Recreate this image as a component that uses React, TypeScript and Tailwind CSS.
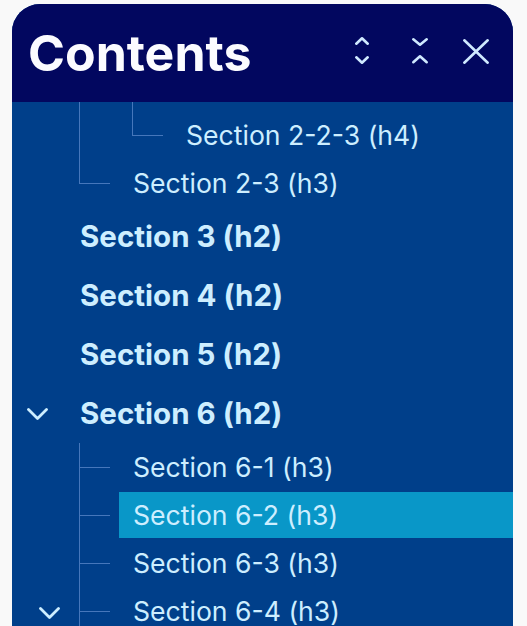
import React from "react";

type Guide = { x: number; kind: "pass" | "tee" | "end" };

interface Row {
  text: string;
  level: 2 | 3 | 4;
  guides: Guide[];
  chevron?: boolean;
  active?: boolean;
}

const rows: Row[] = [
  { text: "Section 2-2-3 (h4)", level: 4, guides: [{ x: 67, kind: "pass" }, { x: 120, kind: "end" }] },
  { text: "Section 2-3 (h3)", level: 3, guides: [{ x: 67, kind: "end" }] },
  { text: "Section 3 (h2)", level: 2, guides: [] },
  { text: "Section 4 (h2)", level: 2, guides: [] },
  { text: "Section 5 (h2)", level: 2, guides: [] },
  { text: "Section 6 (h2)", level: 2, guides: [], chevron: true },
  { text: "Section 6-1 (h3)", level: 3, guides: [{ x: 67, kind: "tee" }] },
  { text: "Section 6-2 (h3)", level: 3, guides: [{ x: 67, kind: "tee" }], active: true },
  { text: "Section 6-3 (h3)", level: 3, guides: [{ x: 67, kind: "tee" }] },
  { text: "Section 6-4 (h3)", level: 3, guides: [{ x: 67, kind: "tee" }], chevron: true },
];

const Chevron = () => (
  <svg width="21" height="12" viewBox="0 0 21 12" fill="none" stroke="#cdeeff" strokeWidth="2.8" strokeLinecap="round" strokeLinejoin="round">
    <path d="M1.5 1.5 L10.5 10.5 L19.5 1.5" />
  </svg>
);

const GuideLines = ({ g }: { g: Guide }) => (
  <>
    {g.kind === "end" ? (
      <div className="absolute top-0 h-1/2 w-px bg-[#4677bb]" style={{ left: g.x }} />
    ) : (
      <div className="absolute top-0 bottom-0 w-px bg-[#4677bb]" style={{ left: g.x }} />
    )}
    {g.kind !== "pass" && (
      <div className="absolute top-1/2 h-px w-[31px] bg-[#4677bb]" style={{ left: g.x }} />
    )}
  </>
);

const TocRow = ({ row }: { row: Row }) => {
  if (row.level === 2) {
    return (
      <div className="flex h-[59px] items-center">
        <div className="flex w-[68px] items-center pl-[15px]">{row.chevron && <Chevron />}</div>
        <span className="text-[29.5px] font-bold leading-none text-[#cdeeff]">{row.text}</span>
      </div>
    );
  }
  const textLeft = row.level === 3 ? 107 : 160;
  return (
    <div className="relative flex h-[48px] items-stretch">
      {row.guides.map((g, i) => (
        <GuideLines key={i} g={g} />
      ))}
      {row.chevron && (
        <div className="absolute left-[27px] top-[20px]">
          <Chevron />
        </div>
      )}
      <div
        className={
          row.active
            ? "my-px flex flex-1 items-center bg-[#0997c8] pl-[14px]"
            : "flex flex-1 items-center pl-[14px]"
        }
        style={{ marginLeft: textLeft }}
      >
        <span className="whitespace-nowrap text-[26.6px] leading-none text-[#cdeeff]">{row.text}</span>
      </div>
    </div>
  );
};

export default function App() {
  return (
    <div className="h-[626px] overflow-hidden bg-[#f9f9f9] pl-[12px] pt-[4px]" style={{ fontFamily: "Inter, 'Noto Sans', sans-serif" }}>
      <div className="flex h-full w-[501px] flex-col overflow-hidden rounded-t-[28px] bg-[#003f8a]">
        <div className="flex h-[98px] shrink-0 items-center bg-[#02075f] pl-[16px] pr-[23px]">
          <h1 className="text-[50px] font-bold leading-none text-[#fbfbff]">Contents</h1>
          <div className="ml-auto flex items-center">
            <svg width="28" height="32" viewBox="0 0 28 32" fill="none" stroke="#cfe9ff" strokeWidth="2.6" strokeLinecap="round" strokeLinejoin="round">
              <path d="M8.3 6.7 L14 1.3 L19.7 6.7" />
              <path d="M8.3 20.3 L14 25.7 L19.7 20.3" />
            </svg>
            <svg className="ml-[30px]" width="28" height="32" viewBox="0 0 28 32" fill="none" stroke="#cfe9ff" strokeWidth="2.6" strokeLinecap="round" strokeLinejoin="round">
              <path d="M7.3 2.3 L14 7.7 L20.7 2.3" />
              <path d="M7.3 25.2 L14 19.3 L20.7 25.2" />
            </svg>
            <svg className="ml-[28px]" width="28" height="32" viewBox="0 0 28 32" fill="none" stroke="#cfe9ff" strokeWidth="2.6" strokeLinecap="round">
              <path d="M2.3 3.3 L25.7 25.7" />
              <path d="M25.7 3.3 L2.3 25.7" />
            </svg>
          </div>
        </div>
        <div className="flex-1 overflow-hidden">
          {/* scrolled list: the rows above 2-2-3 are out of view, only their guides show */}
          <div className="relative h-[9px]">
            <GuideLines g={{ x: 67, kind: "pass" }} />
            <GuideLines g={{ x: 120, kind: "pass" }} />
          </div>
          {rows.map((r) => (
            <TocRow key={r.text} row={r} />
          ))}
        </div>
      </div>
    </div>
  );
}
